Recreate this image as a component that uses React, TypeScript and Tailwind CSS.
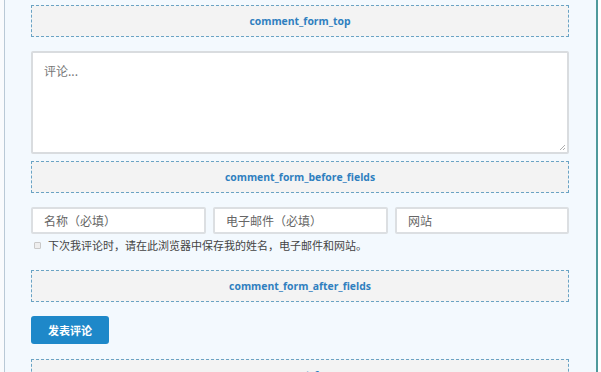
import React from "react";

const Hook = ({ label, className = "" }: { label: string; className?: string }) => (
  <div
    className={`shrink-0 h-[32px] border border-dashed border-[#6aa3c4] bg-[#f3f3f3] flex items-center justify-center ${className}`}
  >
    <span className="text-[10.4px] font-bold text-[#2f7fbf] leading-none" style={{ fontFamily: '"Open Sans", sans-serif' }}>
      {label}
    </span>
  </div>
);

export default function App() {
  const cjk = '"Noto Sans CJK SC", "Open Sans", sans-serif';
  return (
    <div className="w-[601px] h-[372px] overflow-hidden bg-white flex">
      <div className="w-[4px] shrink-0 bg-[#f9fbfd]" />
      <div className="flex-1 border-l border-l-[#b9c9d6] border-r-2 border-r-[#4f9a9c] bg-[#f3f9fe] pl-[26px] pr-[27px] pt-[5px] flex flex-col" style={{ fontFamily: cjk }}>
        <Hook label="comment_form_top" />
        <div className="shrink-0 mt-[14px] h-[103px] bg-white border-2 border-[#d9dcdf] rounded-[2px] relative">
          <div className="pl-[11px] pt-[9px] text-[12px] text-[#777]">评论...</div>
          <svg className="absolute right-[1px] bottom-[1px]" width="7" height="7" viewBox="0 0 7 7">
            <path d="M1 6 L6 1 M4 6 L6 4" stroke="#999" strokeWidth="0.8" />
          </svg>
        </div>
        <Hook label="comment_form_before_fields" className="mt-[7px]" />
        <div className="shrink-0 mt-[14px] flex gap-[7px]">
          <div className="w-[175px] h-[27px] bg-white border-2 border-[#dcdfe2] rounded-[2px] flex items-center pl-[11px] text-[12px] text-[#666]">名称（必填）</div>
          <div className="w-[175px] h-[27px] bg-white border-2 border-[#dcdfe2] rounded-[2px] flex items-center pl-[11px] text-[12px] text-[#666]">电子邮件（必填）</div>
          <div className="flex-1 h-[27px] bg-white border-2 border-[#dcdfe2] rounded-[2px] flex items-center pl-[11px] text-[12px] text-[#666]">网站</div>
        </div>
        <div className="shrink-0 mt-[3px] flex items-center h-[16px]">
          <div className="ml-[3px] w-[7px] h-[7px] border border-[#c9c9c9] bg-[#eee] rounded-[1px]" />
          <span className="ml-[7px] text-[11px] text-[#444]">下次我评论时，请在此浏览器中保存我的姓名，电子邮件和网站。</span>
        </div>
        <Hook label="comment_form_after_fields" className="mt-[17px]" />
        <div className="shrink-0 mt-[14px]">
          <div className="w-[78px] h-[28px] bg-[#1e88c9] rounded-[3px] flex items-center justify-center text-white text-[11px] font-bold">发表评论</div>
        </div>
        <Hook label="comment_form" className="mt-[15px]" />
      </div>
      <div className="w-[3px] shrink-0 bg-white" />
    </div>
  );
}
